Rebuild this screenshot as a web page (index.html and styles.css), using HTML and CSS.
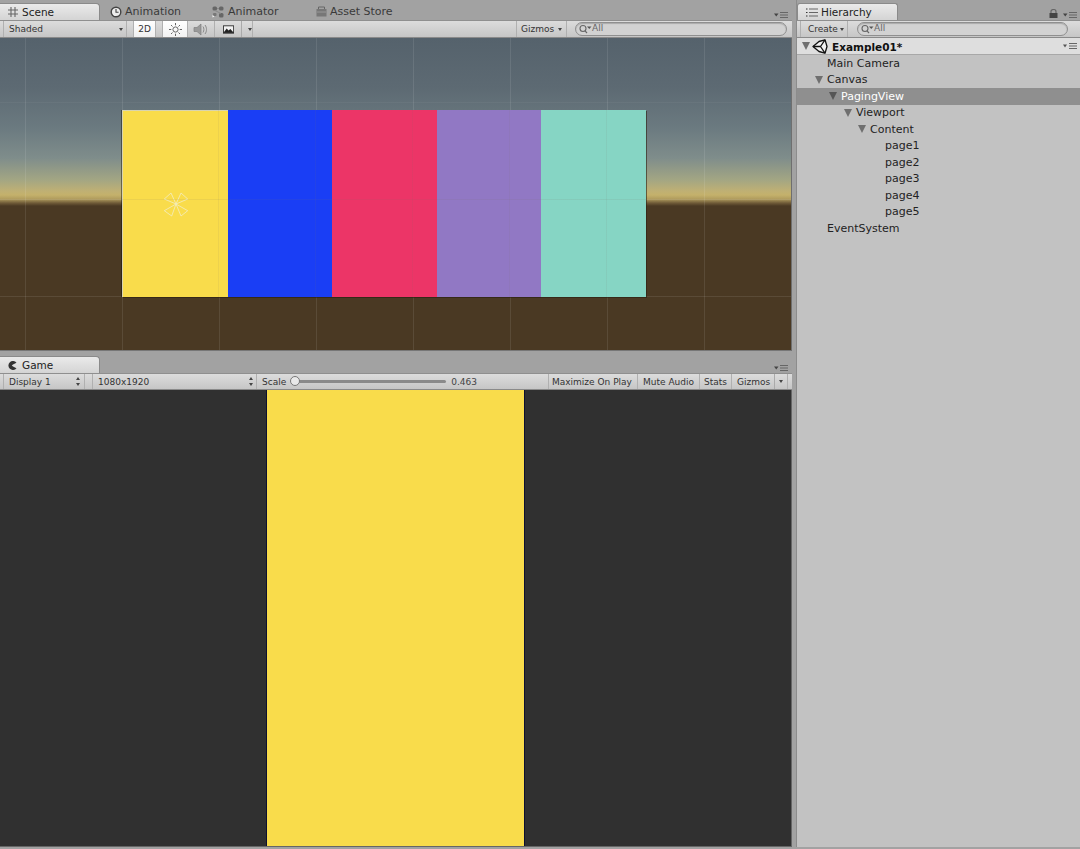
FILE: index.html
```html
<!DOCTYPE html>
<html lang="en">
<head>
<meta charset="utf-8">
<title>Unity Editor</title>
<link rel="stylesheet" href="styles.css">
</head>
<body>
<div class="app">
  <main class="left">
    <section class="scene-panel">
      <div class="tabstrip">
        <div class="tab tab-active tab-first">
          <svg class="ico" width="10" height="10" viewBox="0 0 10 10"><path d="M3 0v10M7 0v10M0 3h10M0 7h10" stroke="#666" stroke-width="1.100" fill="none"/></svg>
          <span>Scene</span>
        </div>
        <div class="tab tab-anim">
          <svg class="ico" width="12" height="12" viewBox="0 0 12 12"><circle cx="6" cy="6" r="4.800" fill="#eee" stroke="#444" stroke-width="1.400"/><path d="M6 3v3.300h2.600" stroke="#444" stroke-width="1.100" fill="none"/></svg>
          <span>Animation</span>
        </div>
        <div class="tab tab-animator">
          <svg class="ico" width="12" height="12" viewBox="0 0 12 12"><rect x="0.500" y="0.500" width="4.500" height="4" rx="1.500" fill="#666"/><rect x="7" y="0.500" width="4.500" height="4" rx="1.500" fill="#666"/><rect x="7" y="7" width="4.500" height="4.500" rx="1.500" fill="#666"/><rect x="1" y="7" width="3.500" height="3" rx="1" fill="#777"/><path d="M0.500 9v2.500L2.500 10.500z" fill="#f4f4f4"/><path d="M3 4.500 9 7.500M5 2.500h2" stroke="#888" fill="none"/></svg>
          <span>Animator</span>
        </div>
        <div class="tab tab-store">
          <svg class="ico" width="11" height="11" viewBox="0 0 11 11"><rect x="0.500" y="3" width="10" height="7.500" fill="#777"/><path d="M2.500 3V1h6v2" stroke="#666" fill="none"/><path d="M1 6h9" stroke="#999"/></svg>
          <span>Asset Store</span>
        </div>
        <svg class="panelmenu" width="15" height="6" viewBox="0 0 15 6"><path d="M0 1.500h4.500L2.250 4.500z" fill="#444"/><path d="M6 .5h8M6 3h8M6 5.500h8" stroke="#666"/></svg>
      </div>
      <div class="toolbar">
        <div class="tool tool-shaded"><span>Shaded</span><i class="caret"></i></div>
        <div class="tool tool-2d"><span>2D</span></div>
        <div class="tool tool-sun">
          <svg width="13" height="13" viewBox="0 0 13 13"><circle cx="6.500" cy="6.500" r="2.600" fill="none" stroke="#666"/><path d="M6.500 0v2.300M6.500 10.700V13M0 6.500h2.300M10.700 6.500H13M2 2l1.500 1.500M9.500 9.500 11 11M11 2 9.500 3.500M3.500 9.500 2 11" stroke="#666"/></svg>
        </div>
        <div class="tool tool-sound">
          <svg width="16" height="13" viewBox="0 0 16 13"><path d="M1 4.500h3L8 1v11L4 8.500H1z" fill="#9a9a9a" stroke="#808080" stroke-width="0.700"/><path d="M10 3.500c1.200 1.800 1.200 4.200 0 6M12 2c2 2.700 2 6.300 0 9" stroke="#8a8a8a" fill="none"/></svg>
        </div>
        <div class="tool tool-image">
          <svg width="12" height="9" viewBox="0 0 12 9"><rect x="0" y="0" width="12" height="9" fill="#333"/><rect x="1" y="1" width="10" height="6" fill="#f2f2f2"/><path d="M1 7.500 4 3.500l2 2 2-1.500 3 3.500z" fill="#222"/></svg>
          <i class="divider"></i>
          <i class="caret"></i>
        </div>
        <div class="flexfill"></div>
        <div class="tool tool-gizmos"><span>Gizmos</span><i class="caret"></i></div>
        <div class="search search-scene">
          <svg width="13" height="10" viewBox="0 0 13 10"><circle cx="4" cy="4.500" r="3" fill="none" stroke="#666" stroke-width="1.100"/><path d="M6 6.800 8 9" stroke="#666" stroke-width="1.200"/><path d="M8 2.500h4.500L10.250 5z" fill="#555"/></svg>
          <span>All</span>
        </div>
      </div>
      <div class="scene-view">
        <div class="pages">
          <div class="page page-yellow">
            <svg class="gizmo" width="26" height="26" viewBox="0 0 26 26"><g fill="none" stroke="#f3ecc0" stroke-width="0.900" opacity="0.900"><path d="M13 13 1.300 8 8 2zM13 13 18 2l6.700 6zM13 13 1.300 19.700 8.700 25zM13 13 18 25l6.700-5.300z"/></g></svg>
          </div>
          <div class="page page-blue"></div>
          <div class="page page-red"></div>
          <div class="page page-purple"></div>
          <div class="page page-teal"></div>
        </div>
      </div>
    </section>
    <section class="game-panel">
      <div class="tabstrip tabstrip-game">
        <div class="tab tab-active tab-first tab-game">
          <svg class="ico" width="9" height="9" viewBox="0 0 9 9"><path d="M8.500 1.800A4.500 4.500 0 1 0 8.500 7.200L5 5.500 3.800 4.500 5 3.500z" fill="#333"/></svg>
          <span>Game</span>
        </div>
        <svg class="panelmenu" width="15" height="6" viewBox="0 0 15 6"><path d="M0 1.500h4.500L2.250 4.500z" fill="#444"/><path d="M6 .5h8M6 3h8M6 5.500h8" stroke="#666"/></svg>
      </div>
      <div class="toolbar toolbar-game">
        <div class="tool tool-display"><span>Display 1</span><i class="updown"></i></div>
        <div class="tool tool-res"><span>1080x1920</span><i class="updown"></i></div>
        <div class="scale">
          <span>Scale</span>
          <div class="slider"><i class="thumb"></i></div>
          <span class="scale-val">0.463</span>
        </div>
        <div class="tool tool-max"><span>Maximize On Play</span></div>
        <div class="tool tool-mute"><span>Mute Audio</span></div>
        <div class="tool tool-stats"><span>Stats</span></div>
        <div class="tool tool-ggizmos"><span>Gizmos</span><i class="divider"></i><i class="caret"></i></div>
      </div>
      <div class="game-view"><div class="game-screen"></div></div>
    </section>
  </main>
  <aside class="right">
    <div class="tabstrip tabstrip-right">
      <div class="tab tab-active tab-hier">
        <svg class="ico" width="12" height="9" viewBox="0 0 12 9"><path d="M3 1h9M3 4.500h9M3 8h9" stroke="#666" stroke-width="1"/><path d="M0 1h1.500M0 4.500h1.500M0 8h1.500" stroke="#333"/></svg>
        <span>Hierarchy</span>
      </div>
      <div class="right-icons">
        <svg width="9" height="9" viewBox="0 0 9 9"><rect x="0.500" y="4" width="8" height="5" fill="#444"/><path d="M2 4V2.500a2.500 2 0 0 1 5 0V4" fill="none" stroke="#666" stroke-width="1.200"/></svg>
        <svg width="15" height="6" viewBox="0 0 15 6"><path d="M0 1.500h4.500L2.250 4.500z" fill="#444"/><path d="M6 .5h8M6 3h8M6 5.500h8" stroke="#666"/></svg>
      </div>
    </div>
    <div class="toolbar toolbar-right">
      <div class="tool tool-create"><span>Create</span><i class="caret"></i></div>
      <div class="search search-hier">
        <svg width="13" height="10" viewBox="0 0 13 10"><circle cx="4" cy="4.500" r="3" fill="none" stroke="#666" stroke-width="1.100"/><path d="M6 6.800 8 9" stroke="#666" stroke-width="1.200"/><path d="M8 2.500h4.500L10.250 5z" fill="#555"/></svg>
        <span>All</span>
      </div>
    </div>
    <div class="scene-head">
      <i class="tri"></i>
      <svg class="unity" width="16" height="15" viewBox="0 0 16 15"><path d="M1 7.500 7 2.500 13 .8 15 7.500 13 14.200 7 12.500z" fill="#f2f2f2" stroke="#111" stroke-width="1.300" stroke-linejoin="round"/><path d="M8.500 7.500H1M8.500 7.500 13 .8M8.500 7.500 13 14.200" stroke="#111" stroke-width="1.300" fill="none"/></svg>
      <span class="scene-name">Example01*</span>
      <svg class="head-menu" width="15" height="6" viewBox="0 0 15 6"><path d="M0 1.500h4L2 4.500z" fill="#555"/><path d="M6 .5h8M6 3h8M6 5.500h8" stroke="#666"/></svg>
    </div>
    <ul class="tree">
      <li class="row d0"><span>Main Camera</span></li>
      <li class="row d0 has"><i class="tri"></i><span>Canvas</span></li>
      <li class="row d1 has sel"><i class="tri"></i><span>PagingView</span></li>
      <li class="row d2 has"><i class="tri"></i><span>Viewport</span></li>
      <li class="row d3 has"><i class="tri"></i><span>Content</span></li>
      <li class="row d4"><span>page1</span></li>
      <li class="row d4"><span>page2</span></li>
      <li class="row d4"><span>page3</span></li>
      <li class="row d4"><span>page4</span></li>
      <li class="row d4"><span>page5</span></li>
      <li class="row d0"><span>EventSystem</span></li>
    </ul>
  </aside>
</div>
</body>
</html>
```
FILE: styles.css
```css
* { box-sizing: border-box; }
html, body { margin: 0; padding: 0; }
body { font-family: "DejaVu Sans", "Liberation Sans", sans-serif; color: #222; background: #a2a2a2; }
i { display: block; }
.app { display: flex; width: 1080px; height: 849px; overflow: hidden; background: #a2a2a2; }
.left { width: 792px; flex: none; display: flex; flex-direction: column; }
.right { width: 284px; margin-left: 4px; flex: none; display: flex; flex-direction: column; border-left: 1px solid #8c8c8c; height: 847px; }

.tabstrip { height: 20px; display: flex; align-items: flex-end; position: relative; flex: none; background: #a2a2a2; }
.tabstrip-game { height: 22px; }
.tab { height: 17px; display: flex; align-items: center; gap: 4px; font-size: 11px; color: #3a3a3a; white-space: nowrap; }
.tab-active { background: linear-gradient(#eaeaea, #d4d4d4); border: 1px solid #8a8a8a; border-bottom: 0; border-radius: 0 4px 0 0; color: #222; }
.tab-first { width: 100px; padding-left: 8px; border-left: 0; font-size: 10.500px; }
.tab-game { gap: 5px; }
.tab-anim { width: 102px; padding-left: 10px; gap: 3px; }
.tab-animator { width: 104px; padding-left: 10px; gap: 4px; }
.tab-store { padding-left: 10px; gap: 3px; }
.tab-hier { width: 101px; padding-left: 8px; gap: 3px; border-radius: 3px 3px 0 0; font-size: 10.500px; }
.panelmenu { position: absolute; right: 3px; bottom: 2px; }
.right-icons { margin-left: auto; display: flex; align-items: flex-end; gap: 5px; padding: 0 2px 2px 0; }

.toolbar { height: 18px; flex: none; display: flex; align-items: stretch; padding-left: 3px; background: linear-gradient(#dcdcdc, #c6c6c6); border-top: 1px solid #8f8f8f; border-bottom: 1px solid #8a8a8a; font-size: 9px; color: #333; }
.toolbar-game { height: 17px; padding-left: 3px; padding-right: 5px; }
.toolbar-right { padding-left: 3px; }
.tool { display: flex; align-items: center; border-left: 1px solid #b0b0b0; border-right: 1px solid #b0b0b0; flex: none; white-space: nowrap; }
.caret { width: 0; height: 0; border-left: 2.500px solid transparent; border-right: 2.500px solid transparent; border-top: 3px solid #444; }
.updown { width: 5px; height: 9px; margin-left: auto; position: relative; }
.updown::before, .updown::after { content: ""; position: absolute; left: 0; width: 0; height: 0; border-left: 2.500px solid transparent; border-right: 2.500px solid transparent; }
.updown::before { top: 0; border-bottom: 3.500px solid #444; }
.updown::after { bottom: 0; border-top: 3.500px solid #444; }
.divider { width: 1px; height: 100%; background: #aaa; }
.flexfill { flex: 1; }

.tool-shaded { width: 124px; padding: 0 3px 0 5px; justify-content: space-between; }
.tool-2d { width: 23px; margin-left: 6px; justify-content: center; background: linear-gradient(#fff, #f0f0f0); }
.tool-sun { width: 26px; margin-left: 6px; justify-content: center; background: linear-gradient(#fff, #f2f2f2); }
.tool-sound { width: 27px; justify-content: center; border-left: 0; }
.tool-image { width: 38px; padding-left: 8px; gap: 7px; border-left: 0; }
.tool-image .caret { margin-left: -1px; }
.tool-gizmos { width: 51px; padding: 0 4px 0 4px; justify-content: space-between; }
.search { display: flex; align-items: center; gap: 0; height: 14px; border: 1px solid #8f8f8f; border-radius: 7px; background: #d2d2d2; color: #666; font-size: 9px; padding-left: 3px; align-self: center; box-shadow: inset 0 1px 1px #aaa; }
.search span { margin-top: -2px; }
.search-scene { width: 212px; margin-left: 8px; margin-right: 5px; }
.search-hier { width: 211px; margin-left: 9px; }
.tool-create { width: 48px; padding: 0 3px 0 7px; justify-content: space-between; }

.scene-view { height: 313px; flex: none; padding: 72px 0 0 122px;
  border-right: 1px solid #6f6f6f; border-bottom: 1px solid #777;
  background:
    repeating-linear-gradient(90deg, transparent 0 25px, rgba(255,255,255,.09) 25px 26px, transparent 26px 97px) 0 0 / 97px 100%,
    linear-gradient(0deg, transparent 0, transparent 53px, rgba(255,255,255,.09) 53px, rgba(255,255,255,.09) 54px, transparent 54px, transparent 150px, rgba(255,255,255,.09) 150px, rgba(255,255,255,.09) 151px, transparent 151px, transparent 247px, rgba(255,255,255,.04) 247px, rgba(255,255,255,.04) 248px, transparent 248px),
    linear-gradient(180deg, #55626c 0, #5d6a73 50px, #6b7a80 90px, #7f8d8b 120px, #a3a683 142px, #bfb074 153px, #c4b16b 157px, #b09c5e 161px, #6f5b38 165px, #4a3923 168px, #4a3923 100%);
}
.pages { display: flex; height: 187px; width: 524px; position: relative; box-shadow: 1px 1px 0 rgba(42,32,16,.6), -1px 0 0 rgba(20,15,8,.45); }
.pages::after { content: ""; position: absolute; inset: 0; pointer-events: none;
  background:
    linear-gradient(rgba(120,110,100,.1), rgba(120,110,100,.1)) 0 89px / 100% 1px no-repeat,
    repeating-linear-gradient(90deg, transparent 0 96px, rgba(120,110,100,.09) 96px 97px);
}
.page { flex: none; height: 100%; }
.page-yellow { width: 106px; background: #f9dc4b; border-left: 1px solid #d9d4b0; border-top: 1px solid #d9d4b0; display: flex; align-items: center; justify-content: center; }
.page-blue { width: 104px; background: #1a3ef5; }
.page-red { width: 105px; background: #ec3567; }
.page-purple { width: 104px; background: #9178c4; }
.page-teal { width: 105px; background: #86d5c4; }

.tool-display { width: 82px; padding: 0 3px 0 5px; }
.tool-res { width: 165px; margin-left: 7px; padding: 0 2px 0 5px; }
.scale { display: flex; align-items: center; width: 291px; padding-left: 5px; flex: none; white-space: nowrap; }
.slider { width: 155px; height: 3px; margin-left: 5px; border-radius: 2px; background: #8a8a8a; position: relative; }
.thumb { position: absolute; left: -1px; top: -4px; width: 10px; height: 10px; border-radius: 50%; background: #e8e8e8; border: 1px solid #777; }
.scale-val { margin-left: 5px; color: #444; }
.tool-max { width: 90px; padding-left: 3px; }
.tool-mute { width: 62px; justify-content: center; border-left: 0; }
.tool-stats { width: 32px; justify-content: center; border-left: 0; }
.tool-ggizmos { width: 56px; padding-left: 5px; gap: 4px; border-left: 0; }

.game-view { height: 457px; flex: none; display: flex; justify-content: center; background: #303030; border-right: 1px solid #666; border-bottom: 1px solid #666; }
.game-screen { width: 259px; background: #f9dc4b; border-left: 1px solid #0d1030; border-right: 1px solid #0d1030; }

.tabstrip-right { height: 20px; }
.scene-head { height: 17px; flex: none; display: flex; align-items: center; background: #dedede; border-bottom: 1px solid #a8a8a8; padding-left: 5px; position: relative; }
.scene-head .unity { margin-left: 2px; }
.scene-name { margin-left: 4px; margin-top: 1px; font-size: 10.500px; font-weight: bold; color: #111; }
.head-menu { margin-left: auto; margin-right: 2px; }
.tri { width: 0; height: 0; flex: none; border-left: 4.500px solid transparent; border-right: 4.500px solid transparent; border-top: 8px solid #6f6f6f; }
.tree { list-style: none; margin: 0; padding: 0; flex: 1; background: #c2c2c2; font-size: 11px; color: #222; }
.row { height: 16.500px; display: flex; align-items: center; white-space: nowrap; }
.row.d0 { padding-left: 30px; }
.row.d1 { padding-left: 44px; }
.row.d2 { padding-left: 59px; }
.row.d3 { padding-left: 73px; }
.row.d4 { padding-left: 88px; }
.row.has .tri { margin-left: -12px; margin-right: 4px; }
.sel { background: #8f8f8f; color: #fff; }
.sel .tri { border-top-color: #555; }
```
